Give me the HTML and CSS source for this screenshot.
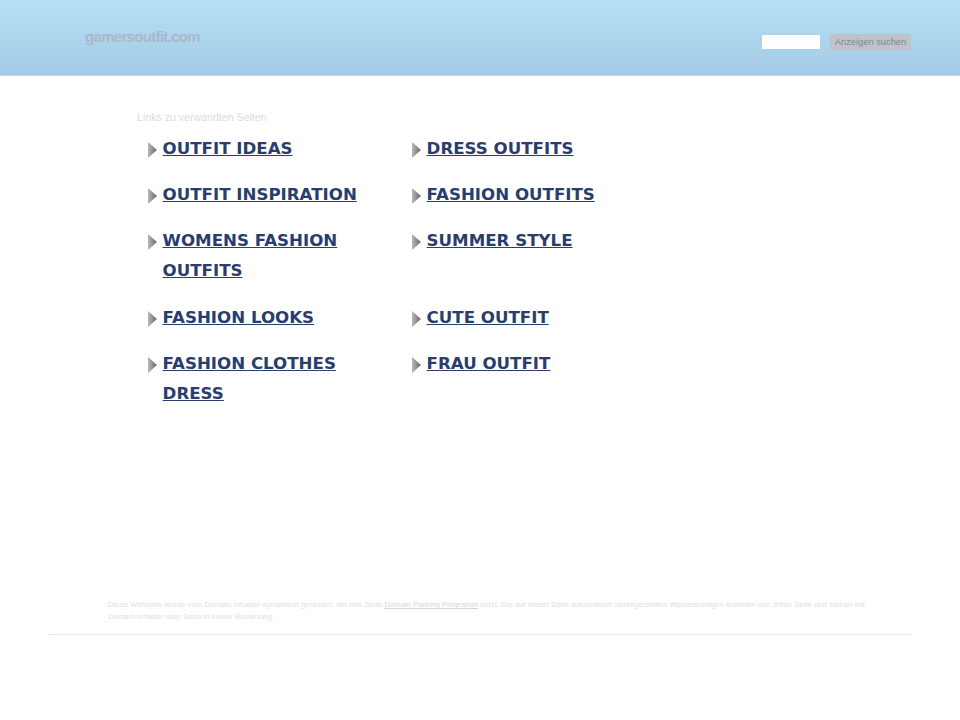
FILE: index.html
```html
<!DOCTYPE html>
<html lang="de">

<head>
    <meta charset="UTF-8">
    <title>gamersoutfit.com</title>
    <link rel="stylesheet" href="styles.css">
</head>

<body>
    <svg class="defs" width="0" height="0">
        <defs>
            <linearGradient id="arrowFill">
                <stop offset="0" stop-color="#b8b8b8" />
                <stop offset="1" stop-color="#666" />
            </linearGradient>
            <symbol id="arrow" viewBox="0 0 10 18">
                <path d="M1 1l9 8-9 8z" fill="url(#arrowFill)" />
            </symbol>
        </defs>
    </svg>

    <div class="header">
        <a class="domain" href="#">gamersoutfit.com</a>
        <form class="search">
            <input type="text" class="search-input">
            <button type="button" class="search-button">Anzeigen suchen</button>
        </form>
    </div>

    <div class="content">
        <p class="links-title">Links zu verwandten Seiten</p>
        <ul class="links">
            <li><svg class="arrow"><use href="#arrow" /></svg><a href="#">OUTFIT IDEAS</a></li>
            <li><svg class="arrow"><use href="#arrow" /></svg><a href="#">DRESS OUTFITS</a></li>
            <li><svg class="arrow"><use href="#arrow" /></svg><a href="#">OUTFIT INSPIRATION</a></li>
            <li><svg class="arrow"><use href="#arrow" /></svg><a href="#">FASHION OUTFITS</a></li>
            <li><svg class="arrow"><use href="#arrow" /></svg><a href="#">WOMENS FASHION OUTFITS</a></li>
            <li><svg class="arrow"><use href="#arrow" /></svg><a href="#">SUMMER STYLE</a></li>
            <li><svg class="arrow"><use href="#arrow" /></svg><a href="#">FASHION LOOKS</a></li>
            <li><svg class="arrow"><use href="#arrow" /></svg><a href="#">CUTE OUTFIT</a></li>
            <li><svg class="arrow"><use href="#arrow" /></svg><a href="#">FASHION CLOTHES DRESS</a></li>
            <li><svg class="arrow"><use href="#arrow" /></svg><a href="#">FRAU OUTFIT</a></li>
        </ul>
    </div>

    <div class="footer">
        <p>Diese Webseite wurde vom Domain-Inhaber dynamisch generiert, der das Sedo <a href="#">Domain Parking Programm</a> nutzt. Die auf dieser Seite automatisch bereitgestellten Werbeanzeigen kommen von dritter Seite und stehen mit Domain-Inhaber oder Sedo in keiner Beziehung.</p>
    </div>
</body>

</html>
```

FILE: styles.css
```css
body {
    margin: 0;
    background-color: #fff;
    font-family: "Liberation Sans", Arial, sans-serif;
}

.defs {
    display: block;
}

.header {
    display: flex;
    justify-content: space-between;
    align-items: flex-start;
    height: 75px;
    padding: 0 49px 0 85px;
    background: linear-gradient(#b6e0f6, #a3cbe5);
    border-bottom: 1px solid #c5d9e6;
}

.domain {
    margin-top: 28px;
    font-size: 15px;
    font-weight: bold;
    letter-spacing: -0.68px;
    line-height: 18px;
    color: #a9b8cb;
    text-decoration: none;
}

.search {
    display: flex;
    gap: 10px;
    margin-top: 34px;
}

.search-input {
    box-sizing: border-box;
    width: 58px;
    height: 14px;
    margin: 1px 0 0;
    padding: 0;
    border: none;
    background-color: #fff;
}

.search-button {
    width: 81px;
    height: 16px;
    padding: 0;
    border: none;
    background-color: #bfc3c9;
    color: #7d8690;
    font-family: inherit;
    font-size: 9.3px;
    line-height: 16px;
}

.content {
    padding: 34px 0 0 137px;
}

.links-title {
    margin: 0 0 9.6px;
    font-size: 10.6px;
    line-height: 14px;
    color: #dcdcdc;
}

.links {
    display: grid;
    grid-template-columns: 264px 264px;
    row-gap: 16.4px;
    margin: 0;
    padding: 0 0 0 10px;
    list-style: none;
}

.links li {
    position: relative;
    padding: 0 24px 0 15.6px;
    font-family: "DejaVu Sans", sans-serif;
    font-size: 16.65px;
    font-weight: bold;
    line-height: 30px;
}

.arrow {
    position: absolute;
    top: 7px;
    left: 0;
    width: 10px;
    height: 18px;
}

.links a {
    color: #2a3d6b;
}

.footer {
    box-sizing: border-box;
    width: 864px;
    height: 35.5px;
    margin: 190.3px 0 0 48px;
    padding: 0 30px 0 60px;
    border-bottom: 1px dotted #d8d8d8;
}

.footer p {
    margin: 0;
    font-size: 7.75px;
    line-height: 12px;
    color: #e0e0e0;
}

.footer a {
    color: #d4d4d4;
}
```
